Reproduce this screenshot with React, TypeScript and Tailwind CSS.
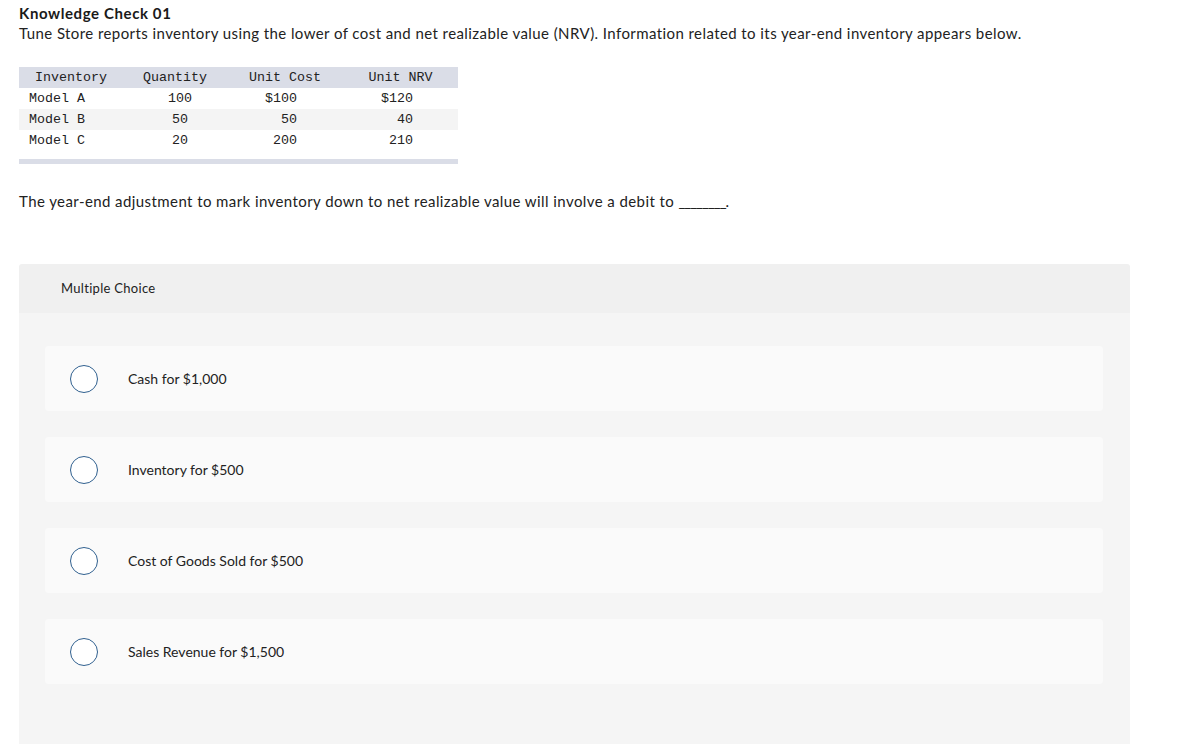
import React from "react";

const rows = [
  { name: "Model A", q: "100", c: "$100", n: "$120", bg: "bg-white" },
  { name: "Model B", q: "50", c: "50", n: "40", bg: "bg-[#f4f4f4]" },
  { name: "Model C", q: "20", c: "200", n: "210", bg: "bg-white" },
];

const options = [
  "Cash for $1,000",
  "Inventory for $500",
  "Cost of Goods Sold for $500",
  "Sales Revenue for $1,500",
];

export default function App() {
  return (
    <div className="min-h-[744px] bg-white text-[#1a1a1a]" style={{ fontFamily: "Lato, 'Open Sans', sans-serif" }}>
      <div className="pl-[19px] pt-[4px]">
        <div className="text-[15px] font-bold leading-[18px] tracking-[0.6px]">Knowledge Check 01</div>
        <div className="text-[15px] leading-[22px] text-[#222] tracking-[0.42px]">
          Tune Store reports inventory using the lower of cost and net realizable value (NRV). Information related to its year-end inventory appears below.
        </div>

        <div className="mt-[23px] w-[439px] text-[13.33px] text-[#222]" style={{ fontFamily: "'Liberation Mono', 'DejaVu Sans Mono', monospace" }}>
          <div className="grid grid-cols-[104px_104px_116px_115px] h-[21px] items-center bg-[#dadde7]">
            <div className="text-center">Inventory</div>
            <div className="text-center">Quantity</div>
            <div className="text-center">Unit Cost</div>
            <div className="text-center">Unit NRV</div>
          </div>
          {rows.map((r) => (
            <div key={r.name} className={`grid grid-cols-[104px_104px_116px_115px] h-[21px] items-center ${r.bg}`}>
              <div className="pl-[10px]">{r.name}</div>
              <div className="pl-[10px] text-center">{r.q}</div>
              <div className="pr-[46px] text-right">{r.c}</div>
              <div className="pr-[45px] text-right">{r.n}</div>
            </div>
          ))}
          <div className="mt-[8px] h-[5px] bg-[#dadde7]" />
        </div>

        <div className="mt-[26px] text-[15px] leading-[22px] text-[#222] tracking-[0.42px]">
          The year-end adjustment to mark inventory down to net realizable value will involve a debit to <span className="tracking-[-1px]">________</span>.
        </div>

        <div className="mt-[52px] w-[1111px] rounded-t-[3px] overflow-hidden">
          <div className="h-[49px] bg-[#f0f0f0] flex items-center pl-[42px] text-[13px] text-[#222] tracking-[0.3px]">
            Multiple Choice
          </div>
          <div className="bg-[#f5f5f5] pt-[33px] pb-[60px] pl-[26px] pr-[27px] flex flex-col gap-[26px]">
            {options.map((o) => (
              <div key={o} className="h-[65px] rounded-[4px] bg-[#fafafa] flex items-center">
                <div className="ml-[25px] w-[28px] h-[28px] rounded-full border-[1.5px] border-[#30608f] bg-white" />
                <div className="ml-[30px] text-[14px] text-[#222]">{o}</div>
              </div>
            ))}
          </div>
        </div>
      </div>
    </div>
  );
}
